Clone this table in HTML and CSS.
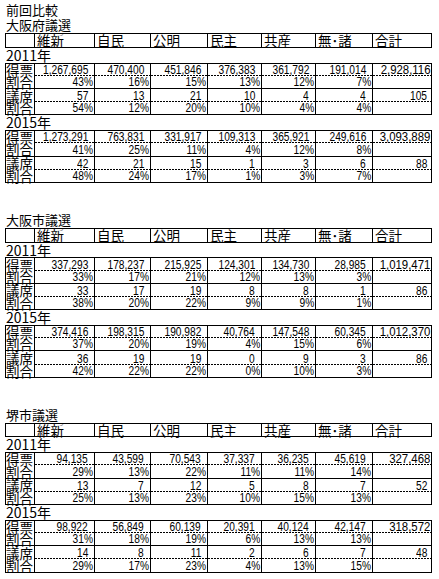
FILE: index.html
```html
<!DOCTYPE html>
<html lang="ja">
<head>
<meta charset="utf-8">
<title>前回比較</title>
<link rel="stylesheet" href="styles.css">
</head>
<body>
<div class="sheet">
  <div class="line cap">前回比較</div>

  <section class="block">
    <div class="line cap">大阪府議選</div>
    <div class="grid hdr"><div></div><div>維新</div><div>自民</div><div>公明</div><div>民主</div><div>共産</div><div>無･諸</div><div>合計</div></div>
    <div class="line year">2011年</div>
    <div class="tbl">
      <div class="grid row r1"><div class="lb">得票</div><div class="n"><span>1,267,695</span></div><div class="n"><span>470,400</span></div><div class="n"><span>451,846</span></div><div class="n"><span>376,383</span></div><div class="n"><span>361,792</span></div><div class="n"><span>191,014</span></div><div class="n t"><span>2,928,116</span></div></div>
      <div class="grid row r2"><div class="lb">割合</div><div class="p"><span>43%</span></div><div class="p"><span>16%</span></div><div class="p"><span>15%</span></div><div class="p"><span>13%</span></div><div class="p"><span>12%</span></div><div class="p"><span>7%</span></div><div class="p"></div></div>
      <div class="grid row r3"><div class="lb">議席</div><div class="n"><span>57</span></div><div class="n"><span>13</span></div><div class="n"><span>21</span></div><div class="n"><span>10</span></div><div class="n"><span>4</span></div><div class="n"><span>4</span></div><div class="n ts"><span>105</span></div></div>
      <div class="grid row r4"><div class="lb">割合</div><div class="p"><span>54%</span></div><div class="p"><span>12%</span></div><div class="p"><span>20%</span></div><div class="p"><span>10%</span></div><div class="p"><span>4%</span></div><div class="p"><span>4%</span></div><div class="p"></div></div>
    </div>
    <div class="line year">2015年</div>
    <div class="tbl">
      <div class="grid row r1"><div class="lb">得票</div><div class="n"><span>1,273,291</span></div><div class="n"><span>763,831</span></div><div class="n"><span>331,917</span></div><div class="n"><span>109,313</span></div><div class="n"><span>365,921</span></div><div class="n"><span>249,616</span></div><div class="n t"><span>3,093,889</span></div></div>
      <div class="grid row r2"><div class="lb">割合</div><div class="p"><span>41%</span></div><div class="p"><span>25%</span></div><div class="p"><span>11%</span></div><div class="p"><span>4%</span></div><div class="p"><span>12%</span></div><div class="p"><span>8%</span></div><div class="p"></div></div>
      <div class="grid row r3"><div class="lb">議席</div><div class="n"><span>42</span></div><div class="n"><span>21</span></div><div class="n"><span>15</span></div><div class="n"><span>1</span></div><div class="n"><span>3</span></div><div class="n"><span>6</span></div><div class="n ts"><span>88</span></div></div>
      <div class="grid row r4"><div class="lb">割合</div><div class="p"><span>48%</span></div><div class="p"><span>24%</span></div><div class="p"><span>17%</span></div><div class="p"><span>1%</span></div><div class="p"><span>3%</span></div><div class="p"><span>7%</span></div><div class="p"></div></div>
    </div>
  </section>

  <div class="blank"></div>

  <section class="block">
    <div class="line cap">大阪市議選</div>
    <div class="grid hdr"><div></div><div>維新</div><div>自民</div><div>公明</div><div>民主</div><div>共産</div><div>無･諸</div><div>合計</div></div>
    <div class="line year">2011年</div>
    <div class="tbl">
      <div class="grid row r1"><div class="lb">得票</div><div class="n"><span>337,293</span></div><div class="n"><span>178,237</span></div><div class="n"><span>215,925</span></div><div class="n"><span>124,301</span></div><div class="n"><span>134,730</span></div><div class="n"><span>28,985</span></div><div class="n t"><span>1,019,471</span></div></div>
      <div class="grid row r2"><div class="lb">割合</div><div class="p"><span>33%</span></div><div class="p"><span>17%</span></div><div class="p"><span>21%</span></div><div class="p"><span>12%</span></div><div class="p"><span>13%</span></div><div class="p"><span>3%</span></div><div class="p"></div></div>
      <div class="grid row r3"><div class="lb">議席</div><div class="n"><span>33</span></div><div class="n"><span>17</span></div><div class="n"><span>19</span></div><div class="n"><span>8</span></div><div class="n"><span>8</span></div><div class="n"><span>1</span></div><div class="n ts"><span>86</span></div></div>
      <div class="grid row r4"><div class="lb">割合</div><div class="p"><span>38%</span></div><div class="p"><span>20%</span></div><div class="p"><span>22%</span></div><div class="p"><span>9%</span></div><div class="p"><span>9%</span></div><div class="p"><span>1%</span></div><div class="p"></div></div>
    </div>
    <div class="line year">2015年</div>
    <div class="tbl">
      <div class="grid row r1"><div class="lb">得票</div><div class="n"><span>374,416</span></div><div class="n"><span>198,315</span></div><div class="n"><span>190,982</span></div><div class="n"><span>40,764</span></div><div class="n"><span>147,548</span></div><div class="n"><span>60,345</span></div><div class="n t"><span>1,012,370</span></div></div>
      <div class="grid row r2"><div class="lb">割合</div><div class="p"><span>37%</span></div><div class="p"><span>20%</span></div><div class="p"><span>19%</span></div><div class="p"><span>4%</span></div><div class="p"><span>15%</span></div><div class="p"><span>6%</span></div><div class="p"></div></div>
      <div class="grid row r3"><div class="lb">議席</div><div class="n"><span>36</span></div><div class="n"><span>19</span></div><div class="n"><span>19</span></div><div class="n"><span>0</span></div><div class="n"><span>9</span></div><div class="n"><span>3</span></div><div class="n ts"><span>86</span></div></div>
      <div class="grid row r4"><div class="lb">割合</div><div class="p"><span>42%</span></div><div class="p"><span>22%</span></div><div class="p"><span>22%</span></div><div class="p"><span>0%</span></div><div class="p"><span>10%</span></div><div class="p"><span>3%</span></div><div class="p"></div></div>
    </div>
  </section>

  <div class="blank"></div>

  <section class="block">
    <div class="line cap">堺市議選</div>
    <div class="grid hdr"><div></div><div>維新</div><div>自民</div><div>公明</div><div>民主</div><div>共産</div><div>無･諸</div><div>合計</div></div>
    <div class="line year">2011年</div>
    <div class="tbl">
      <div class="grid row r1"><div class="lb">得票</div><div class="n"><span>94,135</span></div><div class="n"><span>43,599</span></div><div class="n"><span>70,543</span></div><div class="n"><span>37,337</span></div><div class="n"><span>36,235</span></div><div class="n"><span>45,619</span></div><div class="n t"><span>327,468</span></div></div>
      <div class="grid row r2"><div class="lb">割合</div><div class="p"><span>29%</span></div><div class="p"><span>13%</span></div><div class="p"><span>22%</span></div><div class="p"><span>11%</span></div><div class="p"><span>11%</span></div><div class="p"><span>14%</span></div><div class="p"></div></div>
      <div class="grid row r3"><div class="lb">議席</div><div class="n"><span>13</span></div><div class="n"><span>7</span></div><div class="n"><span>12</span></div><div class="n"><span>5</span></div><div class="n"><span>8</span></div><div class="n"><span>7</span></div><div class="n ts"><span>52</span></div></div>
      <div class="grid row r4"><div class="lb">割合</div><div class="p"><span>25%</span></div><div class="p"><span>13%</span></div><div class="p"><span>23%</span></div><div class="p"><span>10%</span></div><div class="p"><span>15%</span></div><div class="p"><span>13%</span></div><div class="p"></div></div>
    </div>
    <div class="line year">2015年</div>
    <div class="tbl">
      <div class="grid row r1"><div class="lb">得票</div><div class="n"><span>98,922</span></div><div class="n"><span>56,849</span></div><div class="n"><span>60,139</span></div><div class="n"><span>20,391</span></div><div class="n"><span>40,124</span></div><div class="n"><span>42,147</span></div><div class="n t"><span>318,572</span></div></div>
      <div class="grid row r2"><div class="lb">割合</div><div class="p"><span>31%</span></div><div class="p"><span>18%</span></div><div class="p"><span>19%</span></div><div class="p"><span>6%</span></div><div class="p"><span>13%</span></div><div class="p"><span>13%</span></div><div class="p"></div></div>
      <div class="grid row r3"><div class="lb">議席</div><div class="n"><span>14</span></div><div class="n"><span>8</span></div><div class="n"><span>11</span></div><div class="n"><span>2</span></div><div class="n"><span>6</span></div><div class="n"><span>7</span></div><div class="n ts"><span>48</span></div></div>
      <div class="grid row r4"><div class="lb">割合</div><div class="p"><span>29%</span></div><div class="p"><span>17%</span></div><div class="p"><span>23%</span></div><div class="p"><span>4%</span></div><div class="p"><span>13%</span></div><div class="p"><span>15%</span></div><div class="p"></div></div>
    </div>
  </section>
</div>
</body>
</html>
```

FILE: styles.css
```css
* {
  box-sizing: border-box;
  margin: 0;
  padding: 0;
}

html, body {
  background: #fff;
}

body {
  margin: 0;
  color: #000;
  font-family: "Noto Sans CJK JP", "Noto Sans CJK SC", sans-serif;
}

.sheet {
  width: 439px;
  padding: 3px 0 0 5px;
}

.line {
  height: 14.9px;
  line-height: 14px;
  white-space: nowrap;
}

.cap {
  font-size: 13px;
  padding-left: 1px;
}

.year {
  font-size: 14px;
  line-height: 15px;
  padding-left: 1px;
}

.blank {
  height: 29.8px;
}

.grid {
  display: grid;
  grid-template-columns: 30px 60px 56px 57px 54px 54px 57px 59px;
  width: 427px;
}

.hdr {
  height: 14.9px;
  border-top: 1px solid #000;
  border-bottom: 1px solid #000;
}

.hdr > div {
  border-right: 1px solid #000;
  font-size: 13.5px;
  line-height: 13px;
  padding-left: 2px;
  white-space: nowrap;
}

.hdr > div:first-child {
  border-left: 1px solid #000;
}

.row {
  height: 13.2px;
}

.row.r1 {
  border-top: 1px solid #000;
}

.row.r2,
.row.r4 {
  border-bottom: 1px solid #000;
}

.row > div {
  border-right: 1px solid #000;
  display: flex;
  align-items: flex-end;
  justify-content: flex-end;
  white-space: nowrap;
}

.row.r1 > div,
.row.r3 > div {
  background: linear-gradient(90deg, #000 2px, transparent 2px) 0 100% / 3px 1px repeat-x;
}

.row > .lb {
  border-left: 1px solid #000;
  justify-content: flex-start;
  align-items: center;
  font-size: 13.5px;
  line-height: 12px;
  background: none !important;
}

.row > .n,
.row > .p {
  font-family: "Liberation Sans", Arial, sans-serif;
  font-size: 12px;
  line-height: 12px;
}

.row > div > span {
  display: inline-block;
  transform: scaleX(0.85);
  transform-origin: right bottom;
}

.row > .n {
  padding-right: 6px;
}

.row > .p {
  padding-right: 1px;
}

.row > .n.t {
  padding-right: 1px;
}

.row > .n.t > span {
  transform: scaleX(0.95);
}

.row > .n.ts {
  padding-right: 4px;
}
```
